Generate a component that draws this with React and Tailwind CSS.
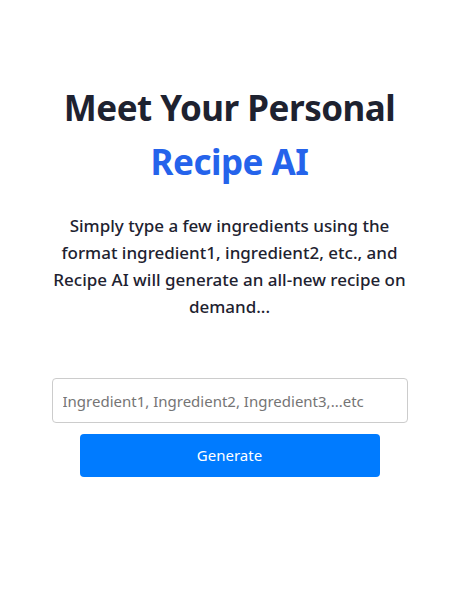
import React, { useState } from "react";

const App = () => {
  const [ingredients, setIngredients] = useState("");

  return (
    <div
      className="min-h-screen bg-white pr-2 pt-[81px]"
      style={{ fontFamily: '"Noto Sans", "Open Sans", sans-serif' }}
    >
      <div className="flex flex-col items-center text-center">
        {/* Heading */}
        <h1 className="text-[35px] leading-[54px] tracking-[-0.5px] font-bold text-[#1e2230]">
          Meet Your Personal
          <br />
          <span className="text-[#2563eb]">Recipe AI</span>
        </h1>

        <p className="mt-[23px] w-[372px] text-[17px] leading-[27px] font-medium text-[#1e2230]">
          Simply type a few ingredients using the format ingredient1,
          ingredient2, etc., and Recipe AI will generate an all-new recipe on
          demand...
        </p>

        {/* Form */}
        <div className="mt-[58px] flex flex-col items-center">
          <input
            className="w-[356px] h-[45px] px-[10px] rounded border border-[#cccccc] text-[15px] text-gray-800 placeholder:text-[#757575] outline-none"
            placeholder="Ingredient1, Ingredient2, Ingredient3,...etc"
            value={ingredients}
            onChange={(e) => setIngredients(e.target.value)}
          />
          <button className="mt-[11px] w-[300px] h-[43px] rounded bg-[#007bff] text-white text-[15px]">
            Generate
          </button>
        </div>
      </div>
    </div>
  );
};

export default App;
